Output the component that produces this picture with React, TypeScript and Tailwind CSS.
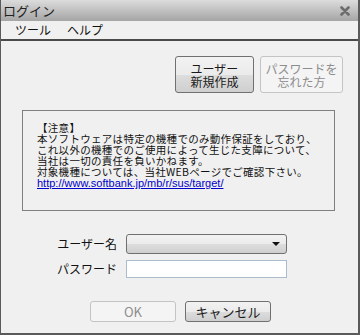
import React from 'react';

const jp = { fontFamily: '"Noto Sans CJK JP", "Liberation Sans", sans-serif' };

const btnOn = 'flex items-center justify-center rounded-[3px] border border-[#707070] bg-[linear-gradient(#f2f2f2_0%,#ebebeb_50%,#dddddd_51%,#cfcfcf_100%)] text-[#1a1a1a]';
const btnOff = 'flex items-center justify-center rounded-[3px] border border-[#c4c4c4] bg-[#f4f4f4] text-[#8d8d8d]';

export default function App() {
  return (
    <div className="w-[360px] h-[335px] flex flex-col bg-[#f0f0f0] border-l border-r-2 border-b-2 border-[#5a5a5a] text-[12px] leading-none" style={jp}>
      {/* title bar */}
      <div className="h-[21px] flex items-center justify-between pl-[2px] pr-[8px] bg-[linear-gradient(#dcdcdc,#a5a5a5)]">
        <span className="text-[13px] text-[#222]">ログイン</span>
        <svg width="10" height="10" viewBox="0 0 10 10" className="mt-[1px]">
          <path d="M1.5 1.5 L8.5 8.5 M8.5 1.5 L1.5 8.5" stroke="#6c6c6c" strokeWidth="2.6" strokeLinecap="round" />
        </svg>
      </div>

      {/* menu bar */}
      <div className="h-[20px] flex items-center gap-[16px] pl-[14px] border-b-2 border-[#4a4a4a] text-[#111]">
        <span>ツール</span>
        <span>ヘルプ</span>
      </div>

      {/* top buttons */}
      <div className="flex justify-end gap-[6px] pr-[15px] mt-[15px]">
        <button className={`${btnOn} w-[79px] h-[37px] flex-col leading-[13px]`}>
          <span>ユーザー</span>
          <span>新規作成</span>
        </button>
        <button className={`${btnOff} w-[83px] h-[37px] flex-col leading-[13px]`}>
          <span>パスワードを</span>
          <span>忘れた方</span>
        </button>
      </div>

      {/* notice */}
      <div className="ml-[21px] mt-[17px] w-[313px] h-[101px] border border-[#7f7f7f] pl-[14px] pt-[11px] text-[10.5px] leading-[11px] tracking-[0.3px] text-[#111]">
        <div>【注意】</div>
        <div>本ソフトウェアは特定の機種でのみ動作保証をしており、</div>
        <div>これ以外の機種でのご使用によって生じた支障について、</div>
        <div>当社は一切の責任を負いかねます。</div>
        <div>対象機種については、当社WEBページでご確認下さい。</div>
        <a href="#" className="text-[#0000cc] underline text-[11px] tracking-normal" style={{ fontFamily: '"Liberation Sans", sans-serif' }}>
          http://www.softbank.jp/mb/r/sus/target/
        </a>
      </div>

      {/* form */}
      <div className="mt-[23px] flex flex-col gap-[6px]">
        <div className="flex items-center">
          <span className="w-[117px] text-right pr-[1px] text-[#111]">ユーザー名</span>
          <div className="ml-[8px] w-[161px] h-[20px] rounded-[3px] border border-[#707070] bg-[linear-gradient(#f2f2f2_0%,#ebebeb_50%,#dddddd_51%,#cfcfcf_100%)] flex items-center justify-end pr-[6px]">
            <svg width="8" height="4" viewBox="0 0 8 4">
              <path d="M0 0 H8 L4 4 Z" fill="#111" />
            </svg>
          </div>
        </div>
        <div className="flex items-center">
          <span className="w-[117px] text-right pr-[1px] text-[#111]">パスワード</span>
          <input type="password" className="ml-[8px] w-[161px] h-[18px] border border-[#abbccd] bg-white outline-none" />
        </div>
      </div>

      {/* bottom buttons */}
      <div className="flex gap-[9px] pl-[89px] mt-[23px]">
        <button className={`${btnOff} w-[86px] h-[21px] text-[13px]`}>OK</button>
        <button className={`${btnOn} w-[86px] h-[21px] text-[13px]`}>キャンセル</button>
      </div>
    </div>
  );
}
